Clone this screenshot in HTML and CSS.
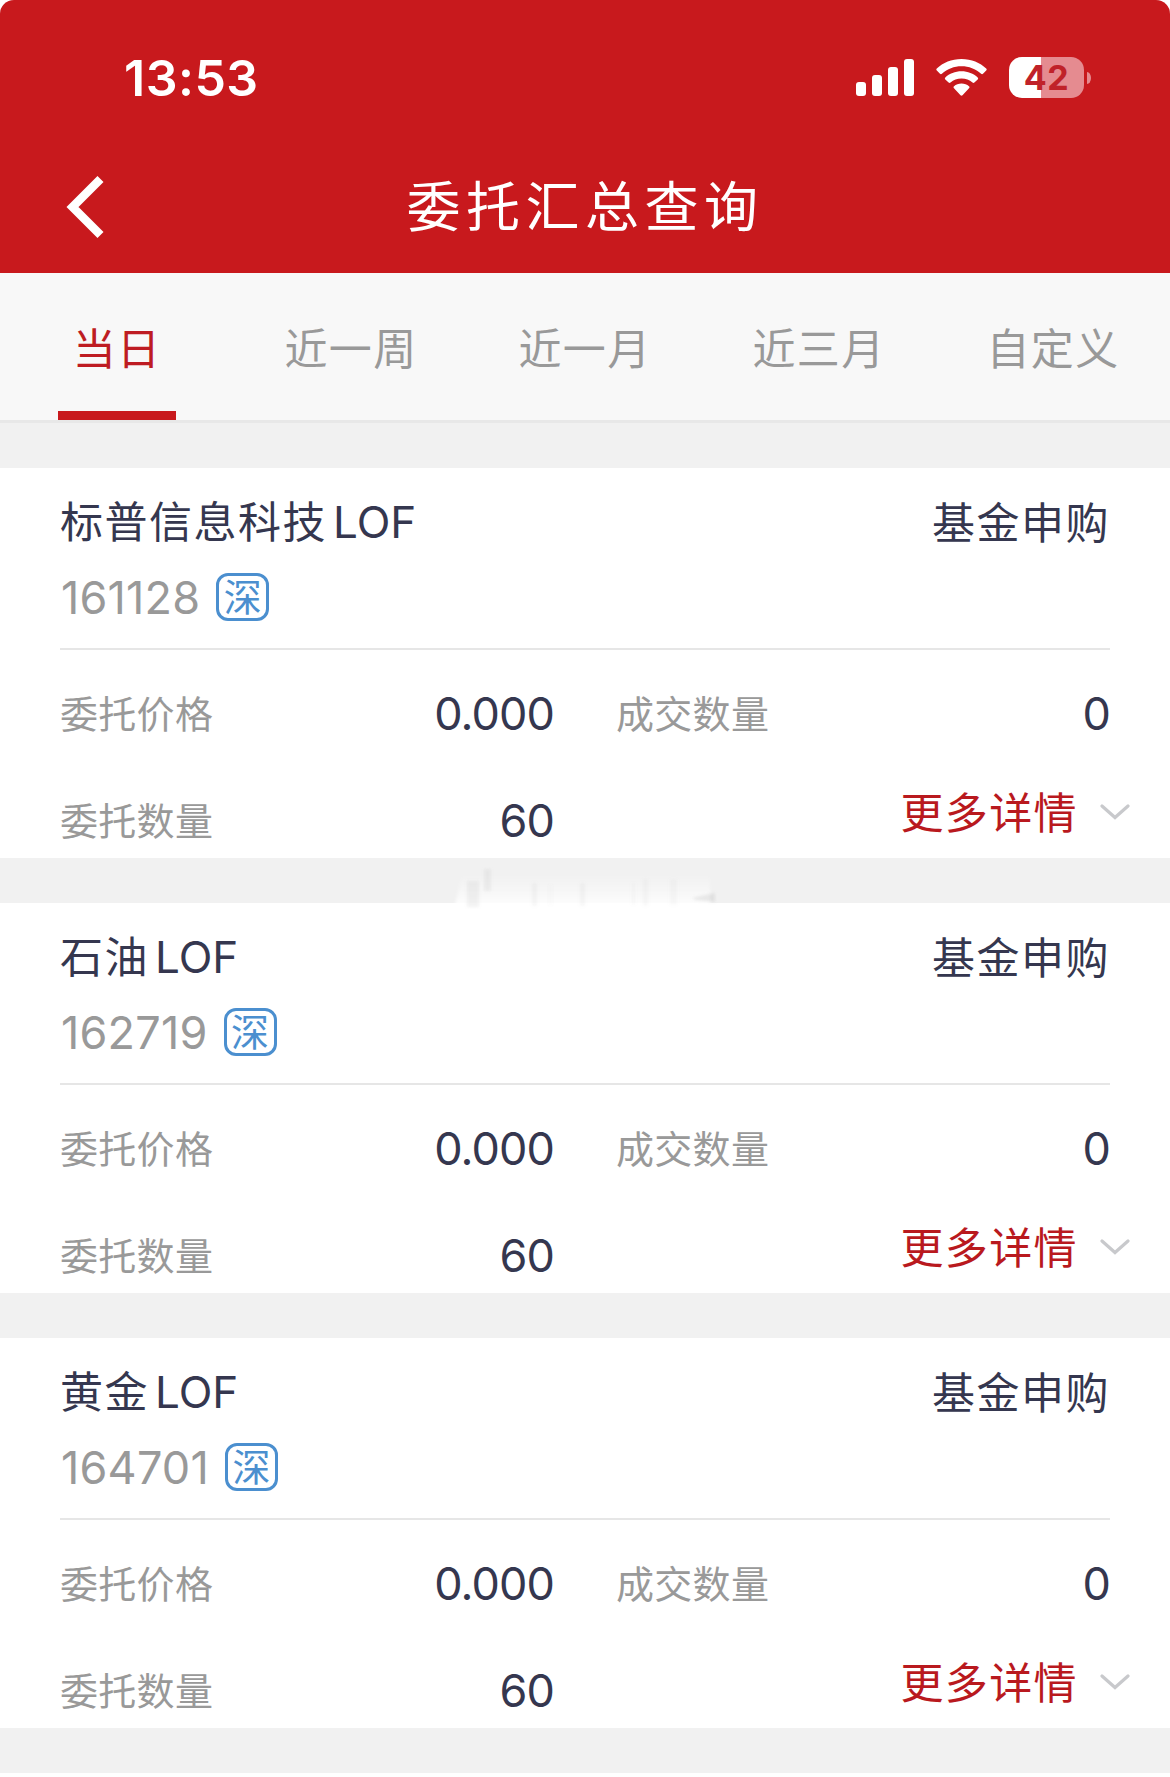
FILE: index.html
```html
<!DOCTYPE html>
<html lang="zh-CN">
<head>
<meta charset="utf-8">
<title>委托汇总查询</title>
<link rel="stylesheet" href="styles.css">
</head>
<body>
<svg class="defs" width="0" height="0" aria-hidden="true">
  <symbol id="chevron" viewBox="0 0 30 16"><path d="M2 2 15 13.500 28 2" fill="none" stroke="#c8c9cc" stroke-width="3.200" stroke-linecap="round"/></symbol>
</svg>
<div class="app">
  <header class="header">
    <div class="status">
      <span class="time">13:53</span>
      <div class="indicators">
        <svg class="signal" viewBox="0 0 58 37" width="58" height="37" fill="#fff">
          <rect x="0" y="23" width="10" height="14" rx="3"/>
          <rect x="16" y="16" width="10" height="21" rx="3"/>
          <rect x="32" y="8" width="10" height="29" rx="3"/>
          <rect x="48" y="0" width="10" height="37" rx="3"/>
        </svg>
        <svg class="wifi" viewBox="0 0 51 37" width="51" height="37" fill="#fff">
          <path d="M25.500 0C35.500 0 44 3.700 50.200 9.500q1 1 0 2l-3.200 3.300q-.9.900-1.900 0C39.500 9.800 33 7.200 25.500 7.200S11.500 9.800 5.900 14.800q-1 .9-1.900 0L.8 11.500q-1-1 0-2C7 3.700 15.500 0 25.500 0Z"/>
          <path d="M25.500 12.300c6.300 0 12 2.300 16.200 6.100q1 1 0 2l-3.300 3.200q-.9.900-1.900 0c-3-2.600-6.700-4.100-11-4.100s-8 1.500-11 4.100q-1 .9-1.900 0l-3.300-3.200q-1-1 0-2c4.200-3.800 9.900-6.100 16.200-6.100Z"/>
          <path d="M25.500 24.600c2.900 0 5.500 1 7.500 2.700q1 1 0 2l-6.500 6.900q-1 .9-2 0L18 29.300q-1-1 0-2c2-1.700 4.600-2.700 7.500-2.700Z"/>
        </svg>
        <div class="battery"><span class="battery-body">42</span><span class="battery-cap"></span></div>
      </div>
    </div>
    <div class="nav">
      <svg class="back" viewBox="0 0 38 62" width="38" height="62"><path d="M34.500 3 6.500 31l28 28" fill="none" stroke="#fff" stroke-width="8.500"/></svg>
      <h1 class="title">委托汇总查询</h1>
    </div>
  </header>
  <nav class="tabs">
    <a class="tab active">当日</a>
    <a class="tab">近一周</a>
    <a class="tab">近一月</a>
    <a class="tab">近三月</a>
    <a class="tab">自定义</a>
  </nav>
  <main class="list">
    <section class="card">
      <div class="head"><span class="name">标普信息科技<span class="latin">LOF</span></span><span class="kind">基金申购</span></div>
      <div class="sub"><span class="code">161128</span><span class="market">深</span></div>
      <div class="grid">
        <div class="col"><div class="row"><span class="label">委托价格</span><span class="value">0.000</span></div><div class="row"><span class="label">委托数量</span><span class="value">60</span></div></div>
        <div class="col"><div class="row"><span class="label">成交数量</span><span class="value">0</span></div><div class="more"><span class="more-text">更多详情</span><svg width="30" height="16"><use href="#chevron"/></svg></div></div>
      </div>
      <svg class="smudge" viewBox="0 0 276 42" width="276" height="42">
        <defs>
          <linearGradient id="fade" x2="0" y2="1"><stop offset="0" stop-color="#fff" stop-opacity="0"/><stop offset=".45" stop-color="#fff" stop-opacity=".4"/><stop offset="1" stop-color="#fff"/></linearGradient>
          <filter id="soft" x="-30%" y="-30%" width="160%" height="160%"><feGaussianBlur stdDeviation="1.800"/></filter>
        </defs>
        <path d="M10 8H258V42H2Z" fill="url(#fade)" filter="url(#soft)"/>
        <g fill="#999" filter="url(#soft)">
          <rect x="15" y="14" width="12" height="26" opacity=".12"/>
          <rect x="32" y="2" width="7" height="22" opacity=".12"/>
          <rect x="80" y="16" width="5" height="23" opacity=".08"/>
          <rect x="97" y="18" width="3" height="20" opacity=".04"/>
          <rect x="128" y="16" width="5" height="23" opacity=".08"/>
          <rect x="180" y="16" width="3" height="22" opacity=".05"/>
          <rect x="191" y="12" width="5" height="27" opacity=".07"/>
          <rect x="218" y="12" width="7" height="26" opacity=".06"/>
          <path d="M240 31 263 26V35L244 33Z" opacity=".2"/>
        </g>
      </svg>
    </section>
    <section class="card">
      <div class="head"><span class="name">石油<span class="latin">LOF</span></span><span class="kind">基金申购</span></div>
      <div class="sub"><span class="code">162719</span><span class="market">深</span></div>
      <div class="grid">
        <div class="col"><div class="row"><span class="label">委托价格</span><span class="value">0.000</span></div><div class="row"><span class="label">委托数量</span><span class="value">60</span></div></div>
        <div class="col"><div class="row"><span class="label">成交数量</span><span class="value">0</span></div><div class="more"><span class="more-text">更多详情</span><svg width="30" height="16"><use href="#chevron"/></svg></div></div>
      </div>
    </section>
    <section class="card">
      <div class="head"><span class="name">黄金<span class="latin">LOF</span></span><span class="kind">基金申购</span></div>
      <div class="sub"><span class="code">164701</span><span class="market">深</span></div>
      <div class="grid">
        <div class="col"><div class="row"><span class="label">委托价格</span><span class="value">0.000</span></div><div class="row"><span class="label">委托数量</span><span class="value">60</span></div></div>
        <div class="col"><div class="row"><span class="label">成交数量</span><span class="value">0</span></div><div class="more"><span class="more-text">更多详情</span><svg width="30" height="16"><use href="#chevron"/></svg></div></div>
      </div>
    </section>
  </main>
</div>
</body>
</html>
```
FILE: styles.css
```css
* { box-sizing: border-box; }
body {
  margin: 0;
  background: #fff;
  font-family: Inter, "Noto Sans CJK SC", sans-serif;
  color: #35374f;
}
.defs { display: block; height: 0; }
.app { width: 1170px; height: 1777px; overflow: hidden; }

.header {
  height: 273px;
  background: #c8191d;
  border-radius: 14px 14px 0 0;
  color: #fff;
}
.status {
  height: 141px;
  padding: 56px 79px 0 124px;
  display: flex;
  justify-content: space-between;
  align-items: flex-start;
}
.time { font-size: 50px; line-height: 45px; font-weight: 600; letter-spacing: .5px; }
.indicators { display: flex; align-items: flex-start; padding-top: 1px; }
.signal { margin-top: 2px; }
.wifi { margin: 2px 22px 0; }
.battery { display: flex; align-items: center; gap: 3px; }
.battery-body {
  width: 75px;
  height: 41px;
  border-radius: 13px;
  background: linear-gradient(90deg, #fff 32px, #e58b90 32px);
  color: #c02229;
  font-size: 34px;
  font-weight: 700;
  line-height: 42px;
  letter-spacing: .5px;
  text-align: center;
}
.battery-cap { width: 4px; height: 12px; border-radius: 0 4px 4px 0 / 0 6px 6px 0; background: #e58b90; }
.nav {
  height: 132px;
  display: grid;
  grid-template-columns: 104px 1fr 104px;
  align-items: center;
}
.back { margin-left: 66px; }
.title {
  margin: 0;
  padding-top: 2px;
  font-size: 54px;
  line-height: 64px;
  font-weight: 400;
  letter-spacing: 5.500px;
  text-align: center;
}

.tabs {
  height: 150px;
  display: grid;
  grid-template-columns: repeat(5, 1fr);
  background: #f8f8f8;
  border-bottom: 3px solid #e8e8e8;
}
.tab {
  height: 147px;
  display: flex;
  flex-direction: column;
  align-items: center;
  color: #999;
  font-size: 43px;
  line-height: 60px;
  letter-spacing: 1.300px;
  padding-top: 46px;
}
.tab.active { color: #be1c22; }
.tab.active::after {
  content: "";
  width: 118px;
  height: 9px;
  margin-top: auto;
  background: #c8191d;
}

.list {
  background: #f1f1f1;
  height: 1350px;
  padding-top: 45px;
  display: flex;
  flex-direction: column;
  gap: 45px;
}
.card {
  position: relative;
  height: 390px;
  background: #fff;
  padding: 24px 60px 0;
  flex: none;
}
.head {
  height: 60px;
  display: flex;
  justify-content: space-between;
  font-size: 43px;
  line-height: 61px;
  letter-spacing: 1.500px;
}
.latin { font-size: 44px; letter-spacing: 0; margin-left: 6px; }
.kind { padding-top: 1px; }
.sub {
  height: 98px;
  padding: 21px 0 0 1px;
  border-bottom: 2px solid #e6e6e6;
  display: flex;
  align-items: flex-start;
  gap: 16px;
}
.code { color: #999; font-size: 45px; line-height: 49px; letter-spacing: .2px; }
.market {
  width: 53px;
  height: 48px;
  border: 3px solid #4b8fcf;
  border-radius: 12px;
  color: #4b8fcf;
  font-size: 38px;
  line-height: 43px;
  text-align: center;
}
.grid { display: grid; grid-template-columns: 494px 494px; justify-content: space-between; }
.col { padding-top: 40px; display: flex; flex-direction: column; gap: 59px; }
.row { height: 48px; display: flex; justify-content: space-between; align-items: center; }
.label { color: #999; font-size: 38px; line-height: 48px; letter-spacing: .3px; }
.value { font-size: 45px; line-height: 48px; letter-spacing: -.9px; }
.more {
  height: 48px;
  margin: -9px -20px 0 0;
  display: flex;
  justify-content: flex-end;
  align-items: center;
  gap: 22px;
  color: #b9191e;
  font-size: 43px;
  line-height: 48px;
  letter-spacing: 1.400px;
}
.more-text { padding-top: 2px; }
.smudge { position: absolute; left: 452px; top: 399px; z-index: 1; }
```
